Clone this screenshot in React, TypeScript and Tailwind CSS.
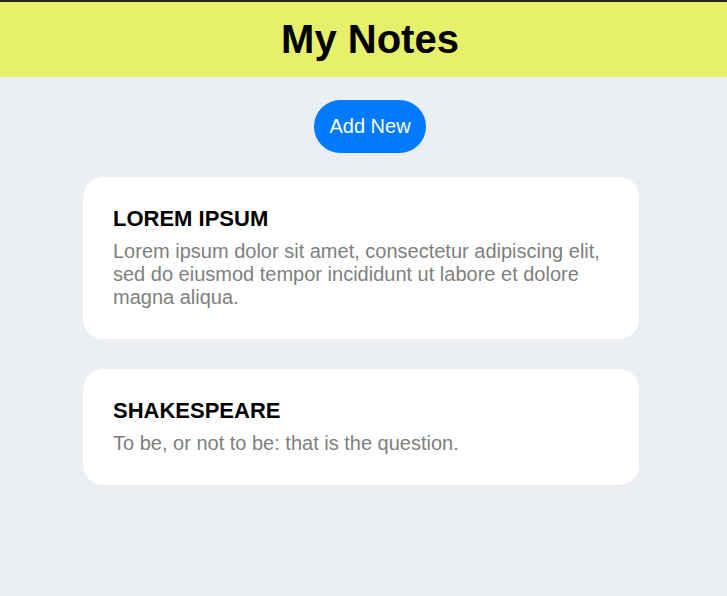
const notes = [
  {
    title: 'LOREM IPSUM',
    body: 'Lorem ipsum dolor sit amet, consectetur adipiscing elit, sed do eiusmod tempor incididunt ut labore et dolore magna aliqua.',
  },
  {
    title: 'SHAKESPEARE',
    body: 'To be, or not to be: that is the question.',
  },
]

export default function App() {
  return (
    <div
      className="min-h-[596px] bg-[#ebeef3] text-black"
      style={{ fontFamily: '"Liberation Sans", Arial, sans-serif' }}
    >
      {/* Header */}
      <header className="h-[77px] border-t-2 border-[#222222] bg-[#e6f06a] pl-[13px] pt-[14px]">
        <h1 className="text-center text-[40px] font-bold leading-[46px]">My Notes</h1>
      </header>

      {/* Add button */}
      <div className="flex justify-center pl-[13px] pt-[23px]">
        <button className="h-[53px] rounded-full bg-[#007bff] px-[15.5px] text-[20px] leading-[23px] text-white">
          Add New
        </button>
      </div>

      {/* Notes list */}
      <div className="ml-[83px] mt-[24px] flex w-[556px] flex-col gap-[30px]">
        {notes.map((note) => (
          <div key={note.title} className="rounded-[20px] bg-white px-[30px] pb-[30px] pt-[29px]">
            <h2 className="text-[22px] font-bold leading-[25px]">{note.title}</h2>
            <p className="mt-[9px] text-[20px] leading-[23px] text-[#808080]">{note.body}</p>
          </div>
        ))}
      </div>
    </div>
  )
}
